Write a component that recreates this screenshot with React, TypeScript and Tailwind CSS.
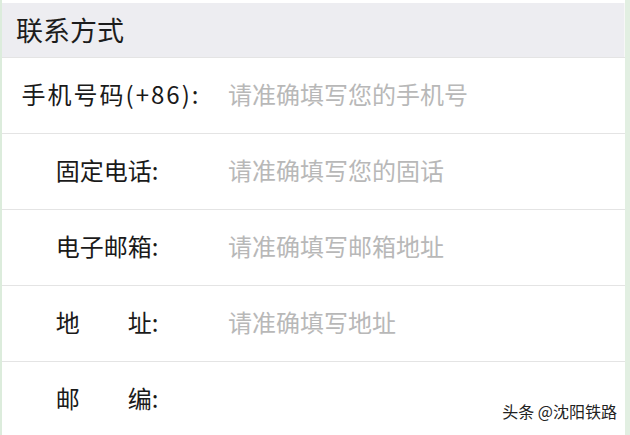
const rows = [
  { label: '手机号码(+86):', placeholder: '请准确填写您的手机号', wide: true },
  { label: '固定电话:', placeholder: '请准确填写您的固话' },
  { label: '电子邮箱:', placeholder: '请准确填写邮箱地址' },
  { label: '地\u3000\u3000址:', placeholder: '请准确填写地址' },
  { label: '邮\u3000\u3000编:', placeholder: '' },
]

export default function App() {
  return (
    <div
      className="relative w-[630px] h-[435px] overflow-hidden bg-white border-l-2 border-l-[#dcecdc] border-r-[5px] border-r-[#e2efe2] pt-[3px]"
      style={{ fontFamily: '"Noto Sans CJK SC", "Noto Sans", sans-serif' }}
    >
      <div className="h-[54px] flex items-center pl-[14px] bg-[#ededf1] text-[27px] text-[#1c1c1c] border-r border-r-[#f7f7f7]">
        联系方式
      </div>
      {rows.map((r, i) => (
        <div
          key={i}
          className="h-[76px] flex items-center border-t border-[#e4e4e4] pb-[3px]"
        >
          <div
            className={
              'w-[218px] text-center text-[24px] text-[#1a1a1a] ' +
              (r.wide ? 'tracking-[2px]' : 'pr-[8px]')
            }
          >
            {r.label}
          </div>
          <div className="pl-[8px] text-[24px] text-[#b8b8b8]">{r.placeholder}</div>
        </div>
      ))}
      <div className="absolute right-[8px] bottom-[12px] text-[16px] text-[#222] [text-shadow:0_0_2px_#fff,0_0_2px_#fff]">
        头条 @沈阳铁路
      </div>
    </div>
  )
}
